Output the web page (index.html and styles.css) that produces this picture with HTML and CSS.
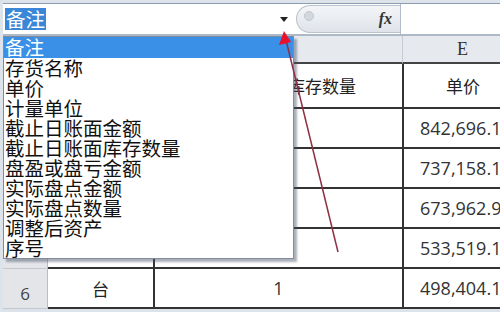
FILE: index.html
```html
<!DOCTYPE html>
<html lang="zh-CN">

<head>
    <meta charset="UTF-8">
    <meta name="viewport" content="width=device-width, initial-scale=1.0">
    <title>数据有效性下拉列表</title>
    <link rel="stylesheet" href="styles.css">
</head>

<body>
    <div class="window">
        <div class="topbar">
            <div class="namebox">
                <span class="sel">备注</span>
                <span class="caret"></span>
            </div>
            <div class="fxbox">
                <span class="knob"></span>
                <span class="fx">fx</span>
            </div>
            <div class="formula"></div>
        </div>

        <!-- cells under the list are left empty, only what shows is filled -->
        <div class="sheet">
            <div class="cell rowhead colhead"></div>
            <div class="cell colhead"></div>
            <div class="cell colhead"></div>
            <div class="cell colhead">E</div>

            <div class="cell rowhead tall"></div>
            <div class="cell title tall"></div>
            <div class="cell title tall line head-c">库存数量</div>
            <div class="cell title tall line">单价</div>

            <div class="cell rowhead"></div>
            <div class="cell"></div>
            <div class="cell num center line"></div>
            <div class="cell num line">842,696.13</div>

            <div class="cell rowhead"></div>
            <div class="cell"></div>
            <div class="cell num center line"></div>
            <div class="cell num line">737,158.13</div>

            <div class="cell rowhead"></div>
            <div class="cell"></div>
            <div class="cell num center line"></div>
            <div class="cell num line">673,962.90</div>

            <div class="cell rowhead"></div>
            <div class="cell"></div>
            <div class="cell num center line"></div>
            <div class="cell num line">533,519.13</div>

            <div class="cell rowhead">6</div>
            <div class="cell">台</div>
            <div class="cell num center line">1</div>
            <div class="cell num line">498,404.13</div>
        </div>

        <!-- validation list drops over the sheet -->
        <ul class="dropdown">
            <li class="active">备注</li>
            <li>存货名称</li>
            <li>单价</li>
            <li>计量单位</li>
            <li>截止日账面金额</li>
            <li>截止日账面库存数量</li>
            <li>盘盈或盘亏金额</li>
            <li>实际盘点金额</li>
            <li>实际盘点数量</li>
            <li>调整后资产</li>
            <li>序号</li>
        </ul>

        <svg class="arrow" width="500" height="312" viewBox="0 0 500 312">
            <line x1="338" y1="252" x2="286" y2="40" stroke="#8e2f45" stroke-width="1.5" />
            <polygon points="284,31 279,45 291,42" fill="#e8102a" />
        </svg>
    </div>
</body>

</html>
```

FILE: styles.css
```css
* {
    margin: 0px;
    padding: 0px;
    box-sizing: border-box;
}

body {
    font-family: "Noto Sans CJK SC", "Noto Sans", sans-serif;
    background: #fff;
}

.window {
    position: relative;
    width: 500px;
    height: 312px;
    overflow: hidden;
    padding: 3px 0 0 3px;
    background: #dde3ea;
}

.topbar {
    display: flex;
    height: 33px;
    background: #fff;
    border-top: 1px solid #8e9cb0;
    border-bottom: 2px solid #aeb9c8;
}

.namebox {
    width: 293px;
    display: flex;
    align-items: center;
    padding-left: 2px;
}

.namebox .sel {
    background: #3a87d8;
    color: #fff;
    font-size: 19.5px;
    line-height: 22px;
    padding: 0 1px;
}

.namebox .caret {
    margin-left: auto;
    margin-right: 8px;
    border-left: 4px solid transparent;
    border-right: 4px solid transparent;
    border-top: 5px solid #222;
}

.fxbox {
    width: 104px;
    margin: 1px 0;
    display: flex;
    align-items: center;
    justify-content: space-between;
    padding: 0 8px 0 7px;
    background: linear-gradient(#f3f5f8, #dfe3e9);
    border: 1px solid #b9c2cd;
    border-right: none;
    border-radius: 14px 0 0 14px;
}

.fxbox .knob {
    width: 10px;
    height: 10px;
    border-radius: 50%;
    background: #d3d8df;
    border: 1px solid #c2c8d1;
    margin-bottom: 6px;
}

.fxbox .fx {
    font-family: "Liberation Serif", serif;
    font-style: italic;
    font-weight: bold;
    font-size: 16px;
    color: #333;
}

.formula {
    flex: 1;
    border-left: 1px solid #b3bcc8;
}

.sheet {
    display: grid;
    grid-template-columns: 45px 105px 249px 120px;
    grid-template-rows: 28px 45px 40px 40px 40px 40px 40px;
    background: #fff;
}

.cell {
    display: flex;
    align-items: center;
    justify-content: center;
    font-size: 17px;
    color: #222;
    border-bottom: 2px solid #333;
}

.cell.line {
    border-left: 2px solid #333;
}

.cell.colhead {
    background: #e6e9ee;
    border-bottom: 2px solid #444;
    border-left: 1px solid #c6cbd2;
    font-family: "Liberation Serif", serif;
    font-size: 18px;
    color: #333;
}

.cell.rowhead {
    background: #e3e5e9;
    border-right: 1px solid #b8bdc5;
    border-bottom: 1px solid #c4c8ce;
    border-left: none;
    font-family: "Open Sans", sans-serif;
    font-size: 17px;
    color: #444;
    padding-top: 10px;
}

.cell.title {
    font-size: 17px;
}

.cell.head-c {
    justify-content: flex-end;
    padding-right: 46px;
}

.cell.num {
    font-family: "Open Sans", sans-serif;
    font-size: 18px;
    color: #333;
    justify-content: flex-start;
    padding-left: 16px;
    white-space: nowrap;
    overflow: hidden;
}

.cell.num.center {
    justify-content: center;
    padding: 0;
}

.dropdown {
    position: absolute;
    left: 3px;
    top: 36px;
    width: 291px;
    height: 223px;
    list-style: none;
    background: #fff;
    border: 1px solid #7f8c9e;
    box-shadow: 3px 3px 2px rgba(70, 80, 100, 0.45);
}

.dropdown li {
    font-size: 19.5px;
    line-height: 20px;
    height: 20px;
    padding-left: 1px;
    color: #111;
    white-space: nowrap;
}

.dropdown li.active {
    background: #3a8fe6;
    color: #fff;
    height: 21px;
}

.arrow {
    position: absolute;
    left: 0;
    top: 0;
    pointer-events: none;
}
```
